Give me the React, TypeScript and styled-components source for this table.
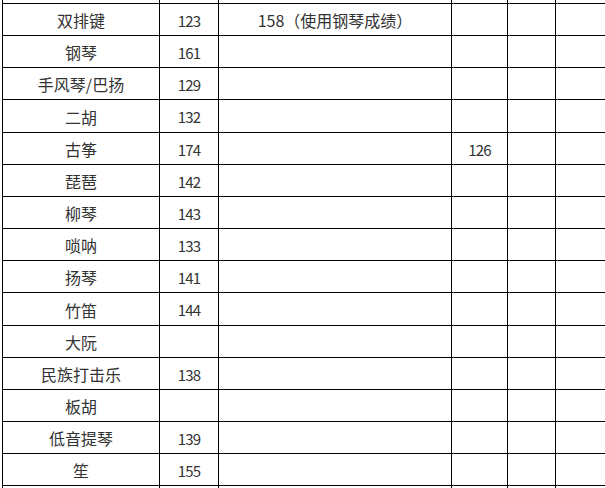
import React from "react";
import styled, { createGlobalStyle } from "styled-components";

const Global = createGlobalStyle`
  html, body { margin: 0; padding: 0; background: #fff; }
  body { overflow: hidden; width: 605px; height: 488px; }
`;

const Page = styled.div`
  padding-left: 2px;
  width: 603px;
  height: 488px;
  overflow: hidden;
  font-family: "Noto Sans CJK SC", "Noto Sans", sans-serif;
  font-size: 16px;
  color: #333;
`;

const Table = styled.div`
  border-left: 1px solid #000;
  width: 620px;
`;

const Row = styled.div<{ $h: number }>`
  display: grid;
  grid-template-columns: 157px 59px 233px 56px 48px 67px;
  height: ${(p) => p.$h}px;
  box-sizing: border-box;
`;

const Cell = styled.div<{ $noBottom?: boolean }>`
  box-sizing: border-box;
  border-right: 1px solid #000;
  border-bottom: ${(p) => (p.$noBottom ? "none" : "1px solid #000")};
  display: flex;
  align-items: center;
  justify-content: center;
  white-space: nowrap;
  line-height: 1;
  padding-top: 1px;
`;

const Num = styled.span`
  font-size: 15px;
  letter-spacing: -0.8px;
`;

type R = { name: string; score?: string; note?: string; extra?: string; h: number };

const rows: R[] = [
  { name: "双排键", score: "123", note: "158（使用钢琴成绩）", h: 32 },
  { name: "钢琴", score: "161", h: 32 },
  { name: "手风琴/巴扬", score: "129", h: 32 },
  { name: "二胡", score: "132", h: 33 },
  { name: "古筝", score: "174", extra: "126", h: 32 },
  { name: "琵琶", score: "142", h: 32 },
  { name: "柳琴", score: "143", h: 32 },
  { name: "唢呐", score: "133", h: 32 },
  { name: "扬琴", score: "141", h: 32 },
  { name: "竹笛", score: "144", h: 33 },
  { name: "大阮", h: 32 },
  { name: "民族打击乐", score: "138", h: 32 },
  { name: "板胡", h: 32 },
  { name: "低音提琴", score: "139", h: 32 },
  { name: "笙", score: "155", h: 32 },
];

const Edge: React.FC<{ h: number; bottom: boolean }> = ({ h, bottom }) => (
  <Row $h={h}>
    {Array.from({ length: 6 }).map((_, i) => (
      <Cell key={i} $noBottom={!bottom} />
    ))}
  </Row>
);

export default function App() {
  return (
    <>
      <Global />
      <Page>
        <Table>
          <Edge h={4} bottom />
          {rows.map((r) => (
            <Row key={r.name} $h={r.h}>
              <Cell>{r.name}</Cell>
              <Cell>{r.score && <Num>{r.score}</Num>}</Cell>
              <Cell>{r.note}</Cell>
              <Cell>{r.extra && <Num>{r.extra}</Num>}</Cell>
              <Cell />
              <Cell />
            </Row>
          ))}
          <Edge h={10} bottom={false} />
        </Table>
      </Page>
    </>
  );
}
